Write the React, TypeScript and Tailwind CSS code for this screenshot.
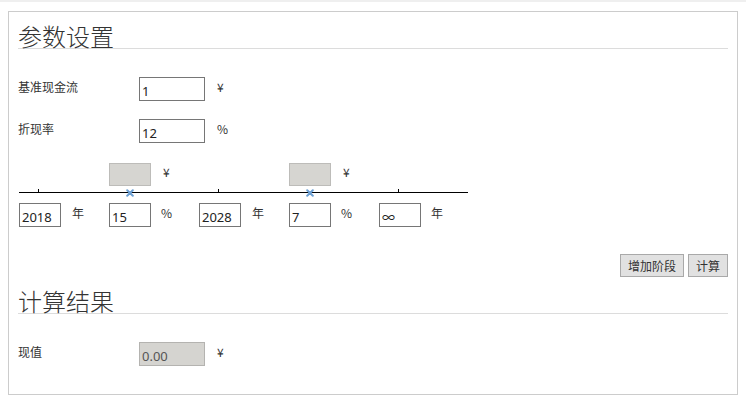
import React from 'react'

const cjk = "font-['Noto_Sans_CJK_SC','Noto_Sans',sans-serif]"
const num = "font-['Noto_Sans','Noto_Sans_CJK_SC',sans-serif]"

function Field({ value, grey = false, w = 'w-[66px]' }: { value: string; grey?: boolean; w?: string }) {
  return (
    <div
      className={`${w} h-[24px] box-border border ${grey ? 'border-[#b4b3b0] bg-[#d5d4d0] text-[#555]' : 'border-[#767676] bg-white text-[#222]'} ${num} text-[13px] leading-[24px] pl-[2px] pt-[1px] overflow-hidden whitespace-nowrap`}
    >
      {value}
    </div>
  )
}

function Heading({ children }: { children: React.ReactNode }) {
  return (
    <div className="h-[37px] box-border border-b border-[#dcdcdc] flex items-end">
      <h2 className={`${cjk} text-[24px] leading-[25px] font-light text-[#333]`}>{children}</h2>
    </div>
  )
}

function Row({ label, value, unit, grey }: { label: string; value: string; unit: string; grey?: boolean }) {
  return (
    <div className="flex items-start h-[24px]">
      <span className="w-[121px] leading-[20px]">{label}</span>
      <Field value={value} grey={grey} />
      <span className="ml-[12px] leading-[20px]">{unit}</span>
    </div>
  )
}

function XMark() {
  return (
    <svg width="8" height="8" viewBox="0 0 8 8" className="absolute left-[17px] -top-[3px]">
      <path d="M1.2 1.2 L6.8 6.8 M6.8 1.2 L1.2 6.8" stroke="#6b9fd3" strokeWidth="2" strokeLinecap="round" />
    </svg>
  )
}

function Unit({ value, unit, rate }: { value: string; unit: string; rate?: boolean }) {
  return (
    <div className="w-[90px] flex flex-col">
      <div className="h-[29px] flex items-start">
        {rate && (
          <>
            <div className="w-[42px] h-[23px] box-border border border-[#bdbcb9] bg-[#d6d5d1]" />
            <span className="ml-[12px] leading-[18px]">¥</span>
          </>
        )}
      </div>
      <div className="relative h-px bg-black">
        {rate ? <XMark /> : <div className="absolute left-[19px] bottom-0 w-px h-[4px] bg-black" />}
      </div>
      <div className="mt-[10px] flex items-start h-[24px]">
        <Field value={value} w="w-[42px]" />
        <span className={`${rate ? 'ml-[10px]' : 'ml-[11px]'} leading-[20px]`}>{unit}</span>
      </div>
    </div>
  )
}

function Button({ children, w }: { children: React.ReactNode; w: string }) {
  return (
    <button
      className={`${w} h-[23px] box-border border border-[#a9a9a9] bg-[#e1e1e1] text-[#333] text-[12px] leading-[20px] flex items-center justify-center`}
    >
      {children}
    </button>
  )
}

export default function App() {
  return (
    <div className={`w-[746px] h-[407px] bg-white ${cjk} text-[12px] text-[#333]`}>
      <div className="h-[2px] bg-[#efefef]" />
      <div className="mt-[9px] ml-[8px] w-[730px] h-[384px] box-border border border-[#cccccc] px-[9px]">
        <Heading>参数设置</Heading>

        <div className="mt-[28px]">
          <Row label="基准现金流" value="1" unit="¥" />
        </div>
        <div className="mt-[18px]">
          <Row label="折现率" value="12" unit="%" />
        </div>

        <div className="mt-[20px] ml-px flex">
          <Unit value="2018" unit="年" />
          <Unit value="15" unit="%" rate />
          <Unit value="2028" unit="年" />
          <Unit value="7" unit="%" rate />
          <div className="w-[89px] flex flex-col">
            <div className="h-[29px]" />
            <div className="relative h-px bg-black">
              <div className="absolute left-[19px] bottom-0 w-px h-[4px] bg-black" />
            </div>
            <div className="mt-[10px] flex items-start h-[24px]">
              <Field value="∞" w="w-[42px]" />
              <span className="ml-[10px] leading-[20px]">年</span>
            </div>
          </div>
        </div>

        <div className="mt-[27px] flex justify-end gap-[4px]">
          <Button w="w-[64px]">增加阶段</Button>
          <Button w="w-[40px]">计算</Button>
        </div>

        <Heading>计算结果</Heading>

        <div className="mt-[28px]">
          <Row label="现值" value="0.00" unit="¥" grey />
        </div>
      </div>
    </div>
  )
}
